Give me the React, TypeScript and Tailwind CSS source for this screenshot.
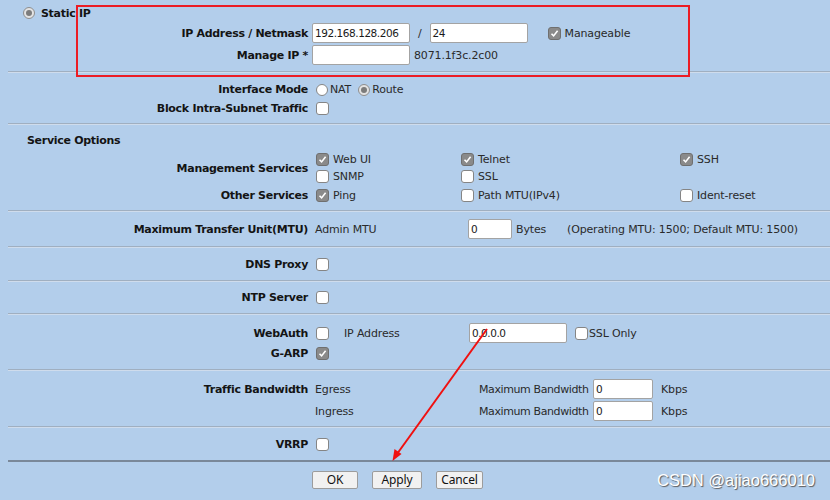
import React from "react";

const Label = ({ children }: { children?: React.ReactNode }) => (
  <div className="w-[308px] shrink-0 whitespace-nowrap text-right font-bold tracking-[-0.3px] text-[#141414]">{children}</div>
);

const Check = ({ checked = false, className = "" }: { checked?: boolean; className?: string }) =>
  checked ? (
    <span className={`inline-flex h-[13px] w-[13px] shrink-0 items-center justify-center rounded-[3px] border border-[#6f6f6f] bg-[#8a8a8a] ${className}`}>
      <svg width="9" height="9" viewBox="0 0 9 9">
        <path d="M1.5 4.8 L3.6 6.9 L7.6 1.8" fill="none" stroke="#ffffff" strokeWidth="1.6" />
      </svg>
    </span>
  ) : (
    <span className={`inline-block h-[13px] w-[13px] shrink-0 rounded-[3px] border border-[#858585] bg-white ${className}`} />
  );

const Radio = ({ checked = false, className = "" }: { checked?: boolean; className?: string }) =>
  checked ? (
    <span className={`inline-flex h-[12px] w-[12px] shrink-0 items-center justify-center rounded-full border border-[#8e8e8e] bg-[#e3e3e3] ${className}`}>
      <span className="h-[6px] w-[6px] rounded-full bg-[#7c7c7c]" />
    </span>
  ) : (
    <span className={`inline-block h-[12px] w-[12px] shrink-0 rounded-full border border-[#858585] bg-white ${className}`} />
  );

const Input = ({ value = "", w }: { value?: string; w: string }) => (
  <div className={`flex h-[20px] shrink-0 items-center rounded-[2px] border border-[#a3a3a3] bg-white pl-[2px] text-[10.5px] tracking-[-0.45px] text-[#1a1a1a] ${w}`}>
    {value}
  </div>
);

const Sep = () => <div className="ml-[8px] h-0 border-t border-b border-t-[#a0afc0] border-b-[#cfdcec]" />;

const Btn = ({ children, w }: { children: React.ReactNode; w: string }) => (
  <div
    className={`flex h-[18px] items-center justify-center rounded-[2px] border border-[#9c9c9c] bg-[#f1f1f1] text-[12px] text-[#111] ${w}`}
    style={{ fontFamily: '"Noto Sans", "DejaVu Sans", sans-serif' }}
  >
    {children}
  </div>
);

export default function App() {
  return (
    <div
      className="relative h-[500px] w-[830px] overflow-hidden whitespace-nowrap bg-[#b3ceeb] text-[11px] leading-none tracking-[-0.15px] text-[#2a2a2a]"
      style={{ fontFamily: '"DejaVu Sans", Verdana, sans-serif' }}
    >
      {/* Section A */}
      <div className="relative h-[71px] pt-[4px]">
        <div className="flex h-[18px] items-center">
          <Radio checked className="ml-[23px]" />
          <span className="ml-[6px] font-bold tracking-[-0.3px] text-[#141414]">Static IP</span>
        </div>
        <div className="flex h-[22px] items-center">
          <Label>IP Address / Netmask</Label>
          <Input value="192.168.128.206" w="ml-[4px] w-[98px]" />
          <span className="ml-[8px]">/</span>
          <Input value="24" w="ml-[8px] w-[98px]" />
          <Check checked className="ml-[20px]" />
          <span className="ml-[4px]">Manageable</span>
        </div>
        <div className="flex h-[22px] items-center">
          <Label>Manage IP *</Label>
          <Input w="ml-[4px] w-[98px]" />
          <span className="ml-[4px]">8071.1f3c.2c00</span>
        </div>
      </div>
      <Sep />
      {/* Section B */}
      <div className="h-[50px] pt-[7px]">
        <div className="flex h-[19px] items-center">
          <Label>Interface Mode</Label>
          <Radio className="ml-[8px]" />
          <span className="ml-[2px]">NAT</span>
          <Radio checked className="ml-[7px]" />
          <span className="ml-[2px]">Route</span>
        </div>
        <div className="flex h-[19px] items-center">
          <Label>Block Intra-Subnet Traffic</Label>
          <Check className="ml-[8px]" />
        </div>
      </div>
      <Sep />
      {/* Section C */}
      <div className="h-[85px] pt-[6px]">
        <div className="flex h-[19px] items-center pl-[27px] font-bold tracking-[-0.3px] text-[#141414]">Service Options</div>
        <div className="flex items-center pt-[1px]">
          <Label>Management Services</Label>
          <div className="ml-[8px] grid grid-cols-[145px_219px_auto]">
            <div className="flex h-[17px] items-center"><Check checked /><span className="ml-[4px]">Web UI</span></div>
            <div className="flex h-[17px] items-center"><Check checked /><span className="ml-[4px]">Telnet</span></div>
            <div className="flex h-[17px] items-center"><Check checked /><span className="ml-[4px]">SSH</span></div>
            <div className="flex h-[17px] items-center"><Check /><span className="ml-[4px]">SNMP</span></div>
            <div className="flex h-[17px] items-center"><Check /><span className="ml-[4px]">SSL</span></div>
            <div />
          </div>
        </div>
        <div className="flex h-[21px] items-center">
          <Label>Other Services</Label>
          <div className="ml-[8px] grid grid-cols-[145px_219px_auto]">
            <div className="flex items-center"><Check checked /><span className="ml-[4px]">Ping</span></div>
            <div className="flex items-center"><Check /><span className="ml-[4px]">Path MTU(IPv4)</span></div>
            <div className="flex items-center"><Check /><span className="ml-[4px]">Ident-reset</span></div>
          </div>
        </div>
      </div>
      <Sep />
      {/* MTU */}
      <div className="flex h-[34px] items-center">
        <Label>Maximum Transfer Unit(MTU)</Label>
        <span className="ml-[7px] w-[153px]">Admin MTU</span>
        <Input value="0" w="w-[44px]" />
        <span className="ml-[4px] w-[51px]">Bytes</span>
        <span>(Operating MTU: 1500; Default MTU: 1500)</span>
      </div>
      <Sep />
      <div className="flex h-[32px] items-center">
        <Label>DNS Proxy</Label>
        <Check className="ml-[8px]" />
      </div>
      <Sep />
      <div className="flex h-[31px] items-center">
        <Label>NTP Server</Label>
        <Check className="ml-[8px]" />
      </div>
      <Sep />
      {/* WebAuth */}
      <div className="h-[54px] pt-[8px]">
        <div className="flex h-[20px] items-center">
          <Label>WebAuth</Label>
          <Check className="ml-[8px]" />
          <span className="ml-[15px] w-[125px]">IP Address</span>
          <Input value="0.0.0.0" w="w-[98px]" />
          <Check className="ml-[8px]" />
          <span className="ml-[1px]">SSL Only</span>
        </div>
        <div className="flex h-[20px] items-center">
          <Label>G-ARP</Label>
          <Check checked className="ml-[8px]" />
        </div>
      </div>
      <Sep />
      {/* Traffic */}
      <div className="h-[55px] pt-[7px]">
        <div className="flex h-[22px] items-center">
          <Label>Traffic Bandwidth</Label>
          <span className="ml-[7px] w-[164px] shrink-0">Egress</span>
          <span className="w-[114px] shrink-0 tracking-[-0.4px]">Maximum Bandwidth</span>
          <Input value="0" w="w-[60px]" />
          <span className="ml-[8px]">Kbps</span>
        </div>
        <div className="flex h-[22px] items-center">
          <Label />
          <span className="ml-[7px] w-[164px] shrink-0">Ingress</span>
          <span className="w-[114px] shrink-0 tracking-[-0.4px]">Maximum Bandwidth</span>
          <Input value="0" w="w-[60px]" />
          <span className="ml-[8px]">Kbps</span>
        </div>
      </div>
      <Sep />
      <div className="flex h-[32px] items-center">
        <Label>VRRP</Label>
        <Check className="ml-[8px]" />
      </div>
      <div className="ml-[8px] h-[2px] bg-[#7a8899]" />
      {/* Footer */}
      <div className="flex gap-[14px] pl-[312px] pt-[9px]">
        <Btn w="w-[46px]">OK</Btn>
        <Btn w="w-[50px]">Apply</Btn>
        <Btn w="w-[47px]">Cancel</Btn>
      </div>

      {/* Red highlight box */}
      <div className="absolute left-[76px] top-[5px] h-[72px] w-[614px] border-2 border-[#ec1c24]" />

      {/* Red arrow */}
      <svg className="pointer-events-none absolute left-0 top-0" width="830" height="500" viewBox="0 0 830 500">
        <line x1="487" y1="329" x2="397" y2="454" stroke="#f01010" strokeWidth="2" />
        <path d="M392.5 461 L394.5 449 L401.5 454 Z" fill="#f01010" />
      </svg>

      {/* Watermark */}
      <div
        className="absolute left-[657px] top-[472px] text-[16.5px] tracking-normal text-white [text-shadow:1px_1px_1px_#5a5a5a]"
        style={{ fontFamily: '"Liberation Sans", Arial, sans-serif' }}
      >
        CSDN @ajiao666010
      </div>
    </div>
  );
}
